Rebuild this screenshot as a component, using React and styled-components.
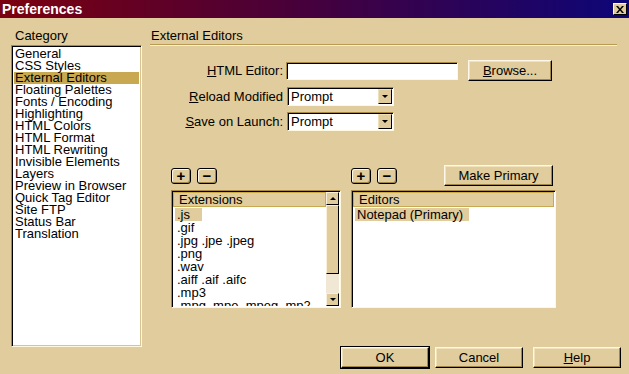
import React from "react";
import styled, { createGlobalStyle } from "styled-components";

const tan = "#e0cc9c";
const gold = "#c8a850";

const GlobalStyle = createGlobalStyle`
  html, body {
    margin: 0;
    padding: 0;
    background: ${tan};
  }
  body {
    font-family: "Liberation Sans", Arial, sans-serif;
    font-size: 13px;
    color: #000;
  }
`;

const categories = [
  "General",
  "CSS Styles",
  "External Editors",
  "Floating Palettes",
  "Fonts / Encoding",
  "Highlighting",
  "HTML Colors",
  "HTML Format",
  "HTML Rewriting",
  "Invisible Elements",
  "Layers",
  "Preview in Browser",
  "Quick Tag Editor",
  "Site FTP",
  "Status Bar",
  "Translation",
];

const extensions = [
  ".js",
  ".gif",
  ".jpg .jpe .jpeg",
  ".png",
  ".wav",
  ".aiff .aif .aifc",
  ".mp3",
  ".mpg .mpe .mpeg .mp2",
];

function App() {
  return (
    <>
      <GlobalStyle />
      <Window>
        <TitleBar>
          <Title>Preferences</Title>
          <CloseBtn>
            <svg width="8" height="7" viewBox="0 0 8 7">
              <path d="M0 0h2l2 2.5L6 0h2L5 3.5 8 7H6L4 4.5 2 7H0l3-3.5z" fill="#000" />
            </svg>
          </CloseBtn>
        </TitleBar>
        <Body>
          <LeftCol>
            <SideLabel>Category</SideLabel>
            <CategoryList>
              {categories.map((c) => (
                <CategoryItem key={c} $active={c === "External Editors"}>
                  {c}
                </CategoryItem>
              ))}
            </CategoryList>
          </LeftCol>
          <RightCol>
            <Header>External Editors</Header>
            <Form>
              <FieldLabel>
                <u>H</u>TML Editor:
              </FieldLabel>
              <TextInput />
              <Button $w={84} $h={21}>
                <u>B</u>rowse...
              </Button>
              <FieldLabel>
                <u>R</u>eload Modified
              </FieldLabel>
              <Select value="Prompt" />
              <span />
              <FieldLabel>
                <u>S</u>ave on Launch:
              </FieldLabel>
              <Select value="Prompt" />
              <span />
            </Form>
            <Lists>
              <Panel $w={170}>
                <Toolbar>
                  <SmallBtn>+</SmallBtn>
                  <SmallBtn>&minus;</SmallBtn>
                </Toolbar>
                <ListBox>
                  <ListMain>
                    <ColHeader>Extensions</ColHeader>
                    <Rows>
                      {extensions.map((e) => (
                        <Row key={e}>
                          <RowText $sel={e === ".js"}>{e}</RowText>
                        </Row>
                      ))}
                    </Rows>
                  </ListMain>
                  <Scrollbar>
                    <ScrollBtn>
                      <Arrow $up />
                    </ScrollBtn>
                    <Thumb />
                    <Track />
                    <ScrollBtn>
                      <Arrow />
                    </ScrollBtn>
                  </Scrollbar>
                </ListBox>
              </Panel>
              <Panel $w={205}>
                <Toolbar>
                  <SmallBtn>+</SmallBtn>
                  <SmallBtn>&minus;</SmallBtn>
                  <Spacer />
                  <Button $w={109} $h={21} $mr={3}>
                    Make Primary
                  </Button>
                </Toolbar>
                <ListBox>
                  <ListMain>
                    <ColHeader>Editors</ColHeader>
                    <Rows>
                      <Row>
                        <RowText $sel $dark>
                          Notepad (Primary)
                        </RowText>
                      </Row>
                    </Rows>
                  </ListMain>
                </ListBox>
              </Panel>
            </Lists>
            <Footer>
              <Button $w={88} $h={21} $default>
                OK
              </Button>
              <Button $w={88} $h={21}>
                Cancel
              </Button>
              <Button $w={88} $h={21}>
                <u>H</u>elp
              </Button>
            </Footer>
          </RightCol>
        </Body>
      </Window>
    </>
  );
}

function Select({ value }) {
  return (
    <SelectBox>
      <SelectValue>{value}</SelectValue>
      <DropBtn>
        <Arrow />
      </DropBtn>
    </SelectBox>
  );
}

export default App;

const Window = styled.div`
  width: 629px;
  height: 374px;
  display: flex;
  flex-direction: column;
  background: ${tan};
  overflow: hidden;
`;

const TitleBar = styled.div`
  height: 18px;
  flex: none;
  display: flex;
  align-items: center;
  justify-content: space-between;
  padding: 0 2px 0 2px;
  background: linear-gradient(90deg, #7c0010 0%, #4a0038 45%, #0c0678 100%);
`;

const Title = styled.span`
  color: #fff;
  font-weight: bold;
  font-size: 14px;
`;

const CloseBtn = styled.div`
  width: 14px;
  height: 12px;
  box-sizing: border-box;
  display: flex;
  align-items: center;
  justify-content: center;
  background: ${tan};
  border: 1px solid;
  border-color: #fff8e8 #000 #000 #fff8e8;
`;

const Body = styled.div`
  flex: 1;
  display: flex;
  padding-left: 11px;
  padding-right: 8px;
`;

const LeftCol = styled.div`
  width: 131px;
  display: flex;
  flex-direction: column;
  margin-right: 8px;
`;

const SideLabel = styled.div`
  height: 27px;
  box-sizing: border-box;
  padding: 11px 0 0 4px;
  line-height: 14px;
`;

const CategoryList = styled.div`
  height: 302px;
  box-sizing: border-box;
  background: #fff;
  border: 1px solid;
  border-color: #a88a40 #fff8e0 #fff8e0 #a88a40;
  box-shadow: inset 1px 1px 0 #000, inset -1px -1px 0 #d8c490;
  padding: 2px 2px 0 2px;
`;

const CategoryItem = styled.div`
  height: 12px;
  line-height: 12px;
  padding-left: 1px;
  white-space: nowrap;
  background: ${(p) => (p.$active ? gold : "transparent")};
`;

const RightCol = styled.div`
  flex: 1;
  display: flex;
  flex-direction: column;
  padding-bottom: 6px;
`;

const Header = styled.div`
  height: 27px;
  box-sizing: border-box;
  padding: 11px 0 0 1px;
  line-height: 14px;
  border-bottom: 1px solid #b89a50;
  box-shadow: 0 1px 0 #f8f0d8;
  margin-right: 4px;
`;

const Form = styled.div`
  display: grid;
  grid-template-columns: 133px auto auto;
  justify-content: start;
  align-items: center;
  column-gap: 3px;
  row-gap: 6px;
  margin-top: 15px;
`;

const FieldLabel = styled.div`
  text-align: right;
  white-space: nowrap;
`;

const TextInput = styled.div`
  width: 172px;
  height: 18px;
  box-sizing: border-box;
  background: #fff;
  border: 1px solid;
  border-color: #a88a40 #fff8e0 #fff8e0 #a88a40;
  box-shadow: inset 1px 1px 0 #000;
  margin-right: 7px;
`;

const SelectBox = styled.div`
  width: 107px;
  height: 19px;
  box-sizing: border-box;
  display: flex;
  background: #fff;
  border: 1px solid;
  border-color: #a88a40 #fff8e0 #fff8e0 #a88a40;
  box-shadow: inset 1px 1px 0 #000;
  padding: 1px;
  margin-left: 1px;
`;

const SelectValue = styled.div`
  flex: 1;
  line-height: 16px;
  padding-left: 2px;
`;

const DropBtn = styled.div`
  width: 14px;
  box-sizing: border-box;
  display: flex;
  align-items: center;
  justify-content: center;
  background: ${tan};
  border: 1px solid;
  border-color: #f0e0b8 #000 #000 #f0e0b8;
`;

const Arrow = styled.div`
  width: 0;
  height: 0;
  border-left: 3px solid transparent;
  border-right: 3px solid transparent;
  ${(p) => (p.$up ? "border-bottom: 3px solid #000;" : "border-top: 3px solid #000;")}
`;

const Button = styled.div`
  width: ${(p) => p.$w}px;
  height: ${(p) => p.$h}px;
  margin-right: ${(p) => p.$mr || 0}px;
  box-sizing: border-box;
  display: flex;
  align-items: center;
  justify-content: center;
  background: ${tan};
  border: 1px solid;
  border-color: #fff8e8 #000 #000 #fff8e8;
  box-shadow: inset -1px -1px 0 #a08848, inset 1px 1px 0 #f0e2bc;
  white-space: nowrap;
  ${(p) => p.$default && "outline: 1px solid #000;"}
`;

const Lists = styled.div`
  display: flex;
  gap: 10px;
  margin-top: 34px;
  margin-left: 21px;
`;

const Panel = styled.div`
  width: ${(p) => p.$w}px;
  display: flex;
  flex-direction: column;
  gap: 4px;
`;

const Toolbar = styled.div`
  height: 21px;
  display: flex;
  align-items: center;
  gap: 6px;
`;

const Spacer = styled.div`
  flex: 1;
`;

const SmallBtn = styled.div`
  width: 20px;
  height: 16px;
  box-sizing: border-box;
  display: flex;
  align-items: center;
  justify-content: center;
  background: ${tan};
  border: 1px solid #000;
  border-radius: 3px;
  box-shadow: inset 1px 1px 0 #fff8e8, inset -1px -1px 0 #a08848;
  font-weight: bold;
  font-size: 15px;
  line-height: 14px;
`;

const ListBox = styled.div`
  height: 118px;
  box-sizing: border-box;
  display: flex;
  background: #fff;
  border: 1px solid;
  border-color: #a88a40 #fff8e0 #fff8e0 #a88a40;
  box-shadow: inset 1px 1px 0 #000;
  padding: 1px;
`;

const ListMain = styled.div`
  flex: 1;
  display: flex;
  flex-direction: column;
  overflow: hidden;
`;

const ColHeader = styled.div`
  height: 15px;
  flex: none;
  box-sizing: border-box;
  background: ${tan};
  border: 1px solid ${gold};
  padding-left: 5px;
  line-height: 13px;
`;

const Rows = styled.div`
  padding: 1px 0 0 2px;
`;

const Row = styled.div`
  height: 13px;
  line-height: 13px;
  white-space: nowrap;
`;

const RowText = styled.span`
  display: inline-block;
  padding: 0 ${(p) => (p.$dark ? "6px" : "12px")} 0 2px;
  background: ${(p) => (p.$sel ? tan : "transparent")};
`;

const Scrollbar = styled.div`
  width: 13px;
  display: flex;
  flex-direction: column;
  background: #f0e8d4;
`;

const ScrollBtn = styled.div`
  height: 13px;
  flex: none;
  box-sizing: border-box;
  display: flex;
  align-items: center;
  justify-content: center;
  background: ${tan};
  border: 1px solid;
  border-color: #f8f0d8 #000 #000 #f8f0d8;
`;

const Thumb = styled.div`
  height: 69px;
  flex: none;
  box-sizing: border-box;
  background: ${tan};
  border: 1px solid;
  border-color: #f8f0d8 #000 #000 #f8f0d8;
`;

const Track = styled.div`
  flex: 1;
`;

const Footer = styled.div`
  margin-top: auto;
  display: flex;
  justify-content: flex-end;
  gap: 6px;
  & > div:nth-child(3) {
    margin-left: 4px;
  }
`;
